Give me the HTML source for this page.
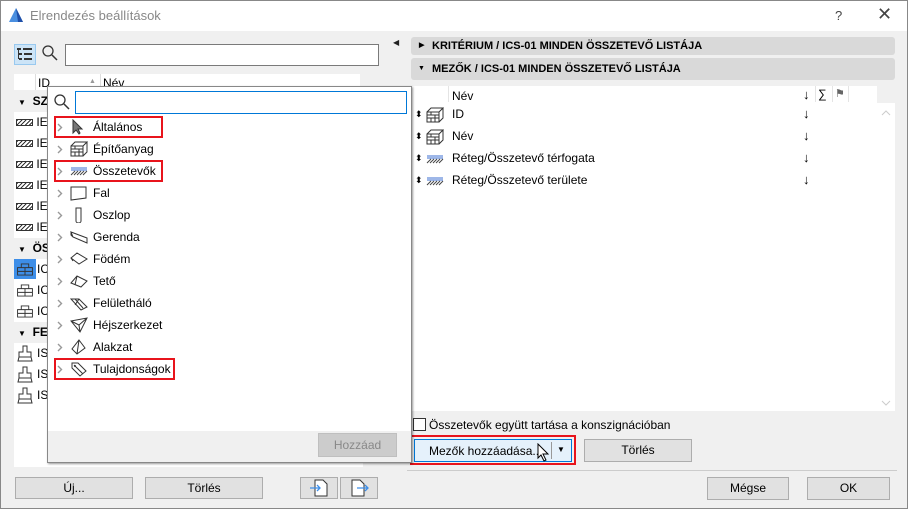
<!DOCTYPE html>
<html><head><meta charset="utf-8"><style>
*{box-sizing:border-box;margin:0;padding:0}
body{width:908px;height:509px;overflow:hidden;background:#f0f0f0;font-family:"Liberation Sans",sans-serif;font-size:12px;color:#000;position:relative}
.a{position:absolute}
.btn{position:absolute;background:#e1e1e1;border:1px solid #adadad;text-align:center;line-height:20px;font-size:12px}
.red{position:absolute;border:2px solid #e8141c}
.row{position:absolute;left:14px;width:123px;height:20px;background:#fff;line-height:20px}
.grp{position:absolute;left:18px;font-weight:bold;line-height:20px}
.it{position:absolute;left:48px;width:362px;height:22px;line-height:22px}
.it .c{position:absolute;left:9px;top:7px}
.it .t{position:absolute;left:45px}
.it svg.i{position:absolute;left:22px;top:3px}
.bar{position:absolute;left:411px;width:484px;background:#d9d9d9;border-radius:3px;font-weight:bold;font-size:11px;padding-left:21px}
.rr{position:absolute;left:414px;height:22px;line-height:22px;width:460px}
</style></head><body>
<svg width="0" height="0" style="position:absolute"><defs>
<symbol id="chev" viewBox="0 0 6 9"><path d="M1 1l3.5 3.5L1 8" fill="none" stroke="#999" stroke-width="1.4"/></symbol>
<symbol id="brick" viewBox="0 0 18 16"><path d="M1 5h12v10H1zM1 5l4-4h12l-4 4M13 15l4-4V1M1 8h12M1 11h12M5 5v3M9 8v3M5 11v4M9 11v4" fill="none" stroke="#333"/></symbol>
<symbol id="wall" viewBox="0 0 18 9"><path d="M1 2h16M1 4h16" stroke="#3d6fd0"/><path d="M1 9l4-4M4 9l4-4M7 9l4-4M10 9l4-4M13 9l4-4" stroke="#444"/></symbol>
<symbol id="bricks2" viewBox="0 0 18 14"><path d="M5 1h8v4H5zM1 5h8v4H1zM9 5h8v4H9zM1 9h16v4H1zM9 9v4" fill="none" stroke="#333"/></symbol>
</defs></svg>
<div class="a" style="left:0;top:0;width:908px;height:509px;border:1px solid #888"></div>
<div class="a" style="left:1px;top:1px;width:906px;height:30px;background:#fff"></div>
<svg class="a" style="left:8px;top:7px" width="16" height="16"><path d="M1 15 L8 1 L15 15Z" fill="#4a8fe0"/><path d="M8 1 L15 15 H10Z" fill="#1f4fa8"/></svg>
<div class="a" style="left:30px;top:8px;color:#888;font-size:13px">Elrendezés beállítások</div>
<div class="a" style="left:835px;top:8px;color:#444;font-size:13px">?</div>
<div class="a" style="left:877px;top:4px;color:#444;font-size:18px">✕</div>

<div class="a" style="left:14px;top:44px;width:22px;height:21px;background:#cce4f7;border:1px solid #99c9ef"></div>
<svg class="a" style="left:17px;top:48px" width="16" height="13"><g fill="#333"><rect x="0" y="0" width="4" height="2"/><rect x="6" y="0" width="9" height="2"/><rect x="2" y="5" width="3" height="2"/><rect x="7" y="5" width="8" height="2"/><rect x="2" y="10" width="3" height="2"/><rect x="7" y="10" width="8" height="2"/><rect x="1" y="2" width="1" height="9"/></g></svg>
<svg class="a" style="left:42px;top:45px" width="16" height="16"><circle cx="6" cy="6" r="5" fill="none" stroke="#333" stroke-width="1.3"/><path d="M10 10 L15 15" stroke="#333" stroke-width="1.5"/></svg>
<div class="a" style="left:65px;top:44px;width:314px;height:22px;background:#fff;border:1px solid #7a7a7a"></div>
<div class="a" style="left:393px;top:38px;font-size:8px;color:#222">◀</div>

<div class="a" style="left:14px;top:74px;width:346px;height:16px;background:#fff"></div>
<div class="a" style="left:35px;top:74px;width:1px;height:16px;background:#ddd"></div>
<div class="a" style="left:100px;top:74px;width:1px;height:16px;background:#ddd"></div>
<div class="a" style="left:38px;top:76px">ID</div>
<div class="a" style="left:89px;top:78px;font-size:7px;color:#999">▲</div>
<div class="a" style="left:103px;top:76px">Név</div>
<div class="a" style="left:14px;top:91px;width:349px;height:376px;background:#fff"></div>
<div class="a" style="left:14px;top:91px;width:123px;height:21px;background:#f0f0f0"></div>
<div class="grp" style="top:91px"><span style="font-size:8px">▼</span>&nbsp; SZ</div>
<div class="row" style="top:112px"><span style="margin-left:2px;display:inline-block;width:17px;height:7px;background:repeating-linear-gradient(135deg,#333 0 1px,#fff 1px 3px);border:1px solid #333;vertical-align:middle"></span> IE</div>
<div class="row" style="top:133px"><span style="margin-left:2px;display:inline-block;width:17px;height:7px;background:repeating-linear-gradient(135deg,#333 0 1px,#fff 1px 3px);border:1px solid #333;vertical-align:middle"></span> IE</div>
<div class="row" style="top:154px"><span style="margin-left:2px;display:inline-block;width:17px;height:7px;background:repeating-linear-gradient(135deg,#333 0 1px,#fff 1px 3px);border:1px solid #333;vertical-align:middle"></span> IE</div>
<div class="row" style="top:175px"><span style="margin-left:2px;display:inline-block;width:17px;height:7px;background:repeating-linear-gradient(135deg,#333 0 1px,#fff 1px 3px);border:1px solid #333;vertical-align:middle"></span> IE</div>
<div class="row" style="top:196px"><span style="margin-left:2px;display:inline-block;width:17px;height:7px;background:repeating-linear-gradient(135deg,#333 0 1px,#fff 1px 3px);border:1px solid #333;vertical-align:middle"></span> IE</div>
<div class="row" style="top:217px"><span style="margin-left:2px;display:inline-block;width:17px;height:7px;background:repeating-linear-gradient(135deg,#333 0 1px,#fff 1px 3px);border:1px solid #333;vertical-align:middle"></span> IE</div>
<div class="a" style="left:14px;top:238px;width:123px;height:21px;background:#f0f0f0"></div>
<div class="grp" style="top:238px"><span style="font-size:8px">▼</span>&nbsp; ÖS</div>
<div class="row" style="top:259px"><span class="a" style="left:0;top:0;width:22px;height:20px;background:#3d8ee8"></span><svg class="a" style="left:2px;top:4px" width="18" height="13"><use href="#bricks2"/></svg><span class="a" style="left:23px">IC</span></div>
<div class="row" style="top:280px"><svg class="a" style="left:2px;top:4px" width="18" height="13"><use href="#bricks2"/></svg><span class="a" style="left:23px">IC</span></div>
<div class="row" style="top:301px"><svg class="a" style="left:2px;top:4px" width="18" height="13"><use href="#bricks2"/></svg><span class="a" style="left:23px">IC</span></div>
<div class="a" style="left:14px;top:322px;width:123px;height:21px;background:#f0f0f0"></div>
<div class="grp" style="top:322px"><span style="font-size:8px">▼</span>&nbsp; FE</div>
<div class="row" style="top:343px"><svg class="a" style="left:3px;top:2px" width="16" height="17"><path d="M6 1h4v6h4v5H2V7h4z M2 12l-1 4h14l-1-4" fill="none" stroke="#333"/></svg><span class="a" style="left:23px">IS</span></div>
<div class="row" style="top:364px"><svg class="a" style="left:3px;top:2px" width="16" height="17"><path d="M6 1h4v6h4v5H2V7h4z M2 12l-1 4h14l-1-4" fill="none" stroke="#333"/></svg><span class="a" style="left:23px">IS</span></div>
<div class="row" style="top:385px"><svg class="a" style="left:3px;top:2px" width="16" height="17"><path d="M6 1h4v6h4v5H2V7h4z M2 12l-1 4h14l-1-4" fill="none" stroke="#333"/></svg><span class="a" style="left:23px">IS</span></div>

<div class="btn" style="left:15px;top:477px;width:118px;height:22px">Új...</div>
<div class="btn" style="left:145px;top:477px;width:118px;height:22px">Törlés</div>
<div class="btn" style="left:300px;top:477px;width:38px;height:22px"><svg width="20" height="18" style="margin-top:1px"><path d="M6 1h8l4 4v12H6z" fill="#fff" stroke="#333"/><path d="M1 9h10M8 6l3 3-3 3" fill="none" stroke="#3d8ee8" stroke-width="1.3"/></svg></div>
<div class="btn" style="left:340px;top:477px;width:38px;height:22px"><svg width="20" height="18" style="margin-top:1px"><path d="M3 1h8l4 4v12H3z" fill="#fff" stroke="#333"/><path d="M8 9h11M16 6l3 3-3 3" fill="none" stroke="#3d8ee8" stroke-width="1.3"/></svg></div>

<div class="bar" style="top:37px;height:18px;line-height:18px"><span class="a" style="left:8px;font-size:7px">▶</span>KRITÉRIUM / ICS-01 MINDEN ÖSSZETEVŐ LISTÁJA</div>
<div class="bar" style="top:58px;height:22px;line-height:22px"><span class="a" style="left:7px;font-size:7px">▼</span>MEZŐK / ICS-01 MINDEN ÖSSZETEVŐ LISTÁJA</div>
<div class="a" style="left:411px;top:86px;width:466px;height:325px;background:#fff;border-left:1px solid #888"></div>
<div class="a" style="left:877px;top:103px;width:18px;height:308px;background:#fff"></div>
<svg class="a" style="left:881px;top:110px" width="10" height="6"><path d="M1 5l4-4 4 4" fill="none" stroke="#ccc"/></svg>
<svg class="a" style="left:881px;top:400px" width="10" height="6"><path d="M1 1l4 4 4-4" fill="none" stroke="#ccc"/></svg>
<div class="a" style="left:452px;top:89px">Név</div>
<div class="a" style="left:448px;top:86px;width:1px;height:16px;background:#e4e4e4"></div>
<div class="a" style="left:815px;top:86px;width:1px;height:16px;background:#e4e4e4"></div>
<div class="a" style="left:832px;top:86px;width:1px;height:16px;background:#e4e4e4"></div>
<div class="a" style="left:848px;top:86px;width:1px;height:16px;background:#e4e4e4"></div>
<div class="a" style="left:803px;top:87px;font-size:13px">↓</div>
<div class="a" style="left:818px;top:87px;font-size:12px">∑</div>
<div class="a" style="left:835px;top:87px;font-size:11px;color:#666">⚑</div>
<div class="rr" style="top:103px"><span class="a" style="left:1px;font-size:9px">⬍</span><svg class="a" style="left:12px;top:4px" width="18" height="16"><use href="#brick"/></svg><span class="a" style="left:38px">ID</span><span class="a" style="left:389px;font-size:13px">↓</span></div>
<div class="rr" style="top:125px"><span class="a" style="left:1px;font-size:9px">⬍</span><svg class="a" style="left:12px;top:4px" width="18" height="16"><use href="#brick"/></svg><span class="a" style="left:38px">Név</span><span class="a" style="left:389px;font-size:13px">↓</span></div>
<div class="rr" style="top:147px"><span class="a" style="left:1px;font-size:9px">⬍</span><svg class="a" style="left:12px;top:6px" width="18" height="11"><use href="#wall"/></svg><span class="a" style="left:38px">Réteg/Összetevő térfogata</span><span class="a" style="left:389px;font-size:13px">↓</span></div>
<div class="rr" style="top:169px"><span class="a" style="left:1px;font-size:9px">⬍</span><svg class="a" style="left:12px;top:6px" width="18" height="11"><use href="#wall"/></svg><span class="a" style="left:38px">Réteg/Összetevő területe</span><span class="a" style="left:389px;font-size:13px">↓</span></div>

<div class="a" style="left:413px;top:418px;width:13px;height:13px;background:#fff;border:1px solid #333"></div>
<div class="a" style="left:429px;top:418px">Összetevők együtt tartása a konszignációban</div>
<div class="red" style="left:410px;top:435px;width:166px;height:30px"></div>
<div class="a" style="left:414px;top:439px;width:158px;height:23px;background:#e5f1fb;border:1px solid #0078d7"></div>
<div class="a" style="left:429px;top:444px">Mezők hozzáadása...</div>
<div class="a" style="left:551px;top:442px;width:1px;height:17px;background:#999"></div>
<div class="a" style="left:557px;top:445px;font-size:8px">▼</div>
<svg class="a" style="left:537px;top:443px" width="14" height="20"><path d="M1 1 L1 15 L4 12 L7 18 L9 17 L6 11 L11 11Z" fill="#fff" stroke="#000"/></svg>
<div class="btn" style="left:584px;top:439px;width:108px;height:23px">Törlés</div>
<div class="a" style="left:407px;top:470px;width:490px;height:1px;background:#ccc"></div>
<div class="btn" style="left:707px;top:477px;width:82px;height:23px">Mégse</div>
<div class="btn" style="left:807px;top:477px;width:83px;height:23px">OK</div>

<div class="a" style="left:47px;top:86px;width:365px;height:377px;background:#fff;border:1px solid #888;box-shadow:1px 1px 2px rgba(0,0,0,.4)"></div>
<svg class="a" style="left:54px;top:94px" width="16" height="16"><circle cx="6" cy="6" r="5" fill="none" stroke="#333" stroke-width="1.3"/><path d="M10 10 L15 15" stroke="#333" stroke-width="1.5"/></svg>
<div class="a" style="left:75px;top:91px;width:332px;height:23px;background:#fff;border:1px solid #0078d7"></div>
<div class="it" style="top:116px"><svg class="c" width="6" height="9"><use href="#chev"/></svg><svg class="i" width="14" height="16"><path d="M3 1 L3 14 L6 11 L9 15 L10 14 L8 10 L12 10Z" fill="#777" stroke="#333"/></svg><span class="t">Általános</span></div>
<div class="it" style="top:138px"><svg class="c" width="6" height="9"><use href="#chev"/></svg><svg class="i" width="18" height="16"><use href="#brick"/></svg><span class="t">Építőanyag</span></div>
<div class="it" style="top:160px"><svg class="c" width="6" height="9"><use href="#chev"/></svg><svg class="i" style="top:5px" width="18" height="11"><use href="#wall"/></svg><span class="t">Összetevők</span></div>
<div class="it" style="top:182px"><svg class="c" width="6" height="9"><use href="#chev"/></svg><svg class="i" width="18" height="16"><path d="M1 2h15v11l-15 2z" fill="none" stroke="#333"/></svg><span class="t">Fal</span></div>
<div class="it" style="top:204px"><svg class="c" width="6" height="9"><use href="#chev"/></svg><svg class="i" width="18" height="16"><path d="M6 1h5v13a2.5 2 0 0 1-5 0z" fill="none" stroke="#333"/></svg><span class="t">Oszlop</span></div>
<div class="it" style="top:226px"><svg class="c" width="6" height="9"><use href="#chev"/></svg><svg class="i" width="18" height="16"><path d="M1 3l16 6v5L3 8zM1 3v3l2 2" fill="none" stroke="#333"/></svg><span class="t">Gerenda</span></div>
<div class="it" style="top:248px"><svg class="c" width="6" height="9"><use href="#chev"/></svg><svg class="i" width="18" height="16"><path d="M1 7l6-5 10 6-8 5zM1 7l2 3" fill="none" stroke="#333"/></svg><span class="t">Födém</span></div>
<div class="it" style="top:270px"><svg class="c" width="6" height="9"><use href="#chev"/></svg><svg class="i" width="18" height="16"><path d="M1 10l6-7 10 5-6 6z M7 3l-2 9" fill="none" stroke="#333"/></svg><span class="t">Tető</span></div>
<div class="it" style="top:292px"><svg class="c" width="6" height="9"><use href="#chev"/></svg><svg class="i" width="18" height="16"><path d="M1 4l8 0 8 8-6 3z M5 4l8 9M9 4l-4 6" fill="none" stroke="#333"/></svg><span class="t">Felületháló</span></div>
<div class="it" style="top:314px"><svg class="c" width="6" height="9"><use href="#chev"/></svg><svg class="i" width="18" height="16"><path d="M1 4l16 -3-7 14zM1 4l8 4 8-7M9 8l1 7" fill="none" stroke="#333"/></svg><span class="t">Héjszerkezet</span></div>
<div class="it" style="top:336px"><svg class="c" width="6" height="9"><use href="#chev"/></svg><svg class="i" width="18" height="16"><path d="M9 1l6 8-8 6-5-5z M9 1l-2 14" fill="none" stroke="#333"/></svg><span class="t">Alakzat</span></div>
<div class="it" style="top:358px"><svg class="c" width="6" height="9"><use href="#chev"/></svg><svg class="i" width="18" height="16"><path d="M2 2h6l8 8-6 5-8-8z M4 4l9 9" fill="none" stroke="#333"/><circle cx="5" cy="5" r="1" fill="#333"/></svg><span class="t">Tulajdonságok</span></div>
<div class="a" style="left:48px;top:431px;width:363px;height:31px;background:#f0f0f0"></div>
<div class="a" style="left:318px;top:433px;width:79px;height:24px;background:#ccc;border:1px solid #bfbfbf;color:#888;text-align:center;line-height:22px">Hozzáad</div>
<div class="red" style="left:54px;top:116px;width:109px;height:22px"></div>
<div class="red" style="left:54px;top:160px;width:109px;height:22px"></div>
<div class="red" style="left:54px;top:358px;width:121px;height:22px"></div>
</body></html>
